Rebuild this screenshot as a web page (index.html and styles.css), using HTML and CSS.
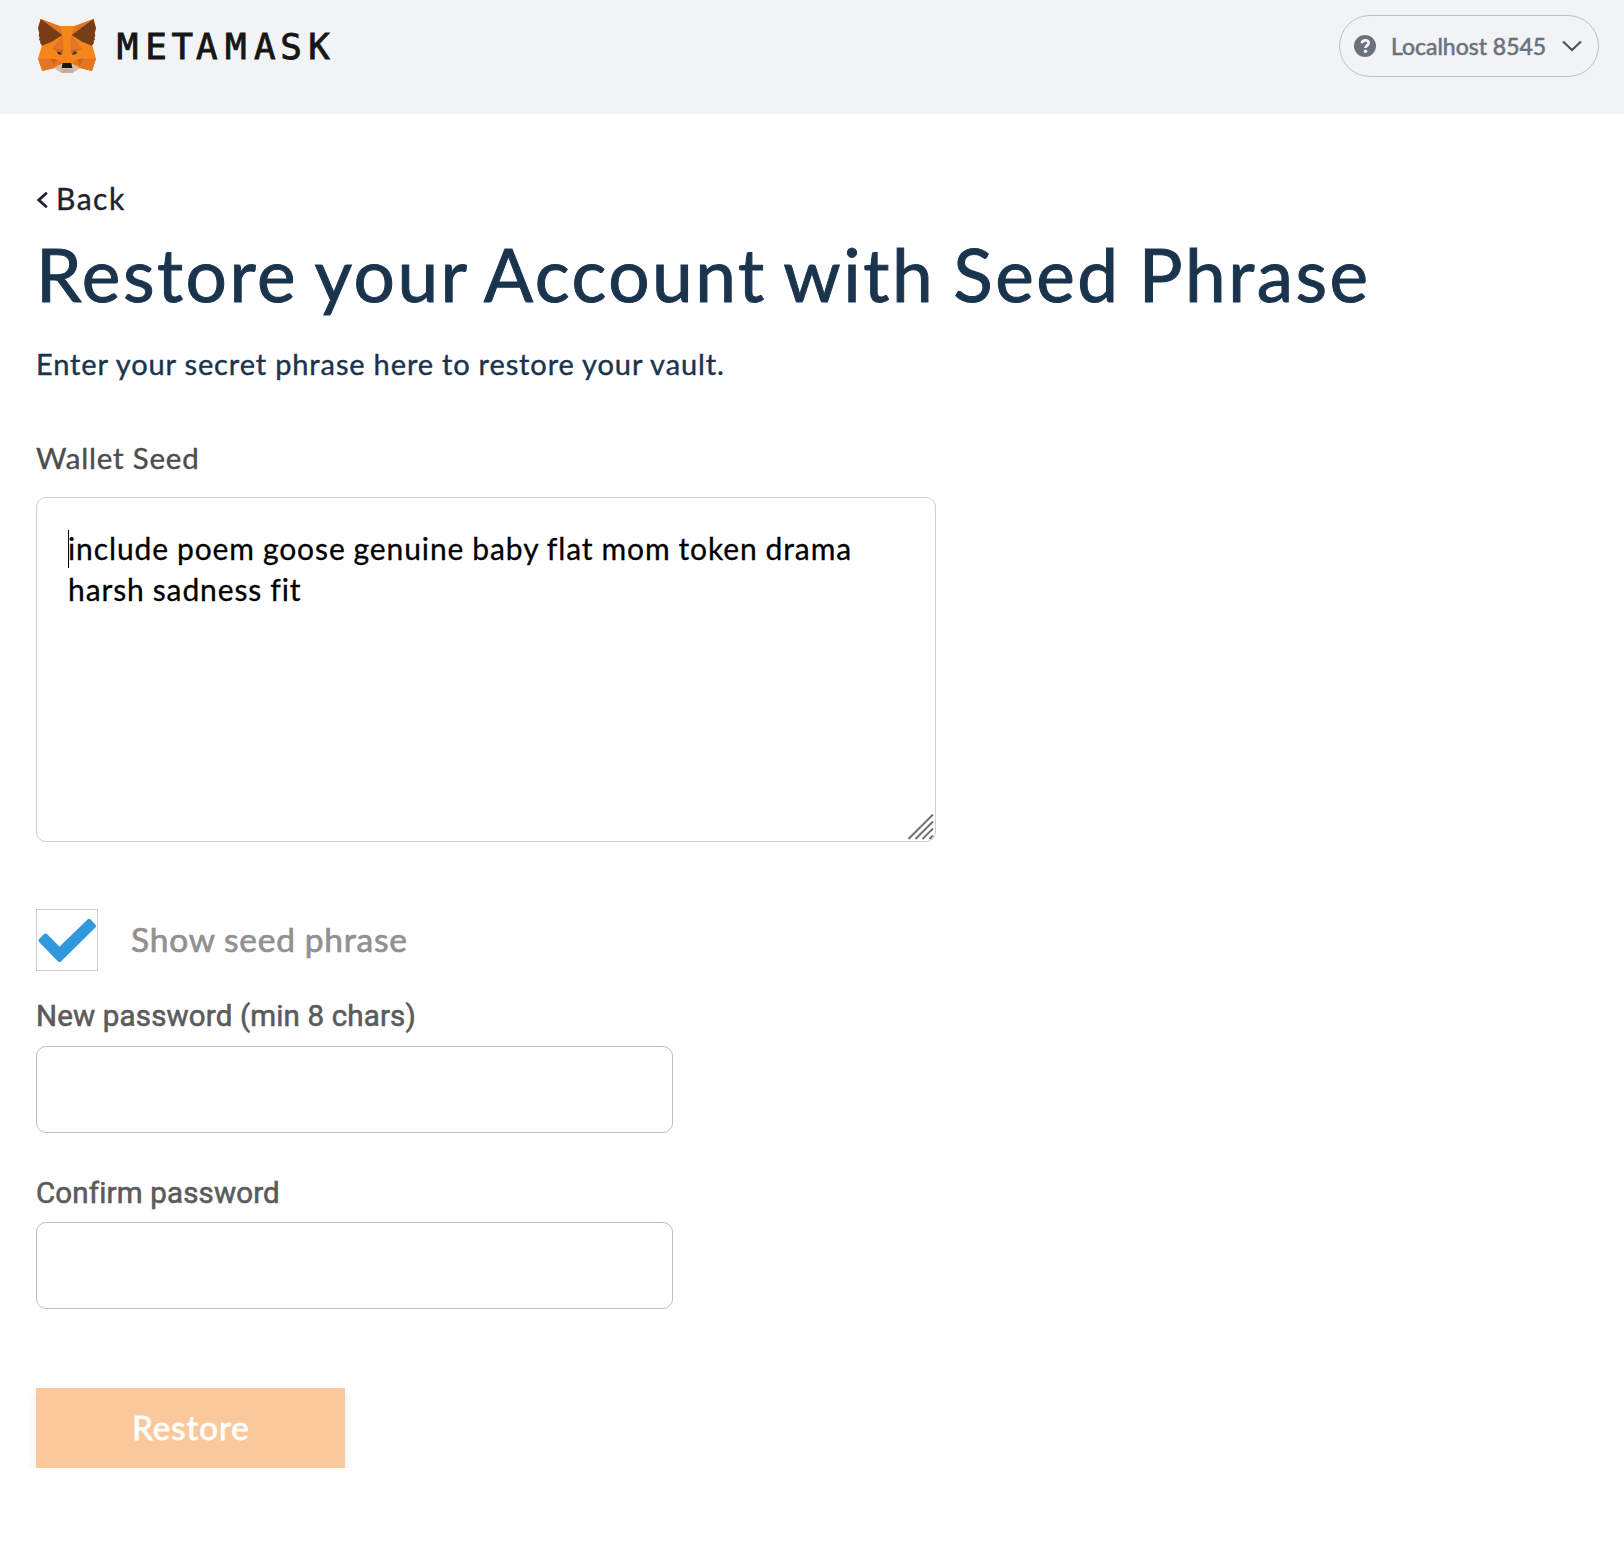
FILE: index.html
```html
<!DOCTYPE html>
<html lang="en">
<head>
<meta charset="utf-8">
<title>MetaMask</title>
<link rel="stylesheet" href="styles.css">
</head>
<body>
<header class="header">
  <div class="brand">
    <svg class="fox" width="60" height="56" viewBox="51 54 180 168">
      <path fill="#f6851b" d="M62 57L119 78H164L221 57L228 85L217 136L228 176L216 213L180 204L158 218H125L103 204L67 213L54 176L66 136L54 85Z"/>
      <path fill="#e27625" d="M62 57L119 78L127 105ZM220 57L164 78L155 105Z"/>
      <path fill="#763d16" d="M62 57L127 105L96 125L66 137L60 128L61 122L57 120L59 111L56 109L58 98L54 85ZM220 57L155 105L186 125L216 137L222 128L221 122L225 120L223 111L226 109L224 98L228 85Z"/>
      <path fill="#e27625" d="M127 106L96 146L130 149L130 130ZM155 106L186 146L152 149L152 130Z"/>
      <path fill="#e27625" d="M54 176H91L106 203L67 213ZM228 176H191L176 203L216 213Z"/>
      <path fill="#cd6116" d="M91 176L109 177L104 199ZM191 176L173 177L178 199ZM96 146L130 149L125 166L116 154ZM186 146L152 149L157 166L166 154Z"/>
      <path fill="#e4751f" d="M109 177L127 190L104 199ZM173 177L155 190L178 199Z"/>
      <path fill="#233447" d="M110 155L121 156L125 164L115 163ZM172 155L161 156L157 164L167 163Z"/>
      <path fill="#d5bfb2" d="M103 203L126 191H156L179 203L158 218H125Z"/>
      <path fill="#c0ad9e" d="M122 206H160L158 218H125Z"/>
      <path fill="#161616" d="M128 189H154L157 204H125Z"/>
    </svg>
    <svg class="wordmark" width="240" height="50" viewBox="0 0 240 50">
      <text x="17.5 46 72.3 96.8 125.7 154.8 181 209" y="38.4">METAMASK</text>
    </svg>
  </div>
  <div class="network">
    <svg width="22" height="22" viewBox="0 0 22 22"><circle cx="11" cy="11" r="11" fill="#6a737d"/><path d="M7.8 8.2C8.2 5.9 9.5 5.4 11.2 5.4C13.2 5.4 14.6 6.5 14.6 8.2C14.6 10.4 11.6 10.4 11.6 13" fill="none" stroke="#f2f3f4" stroke-width="2.7"/><circle cx="11.5" cy="16.2" r="1.8" fill="#f2f3f4"/></svg>
    <span class="network-name">Localhost 8545</span>
    <svg width="22" height="14" viewBox="0 0 22 14"><path d="M2 2.5L11 11L20 2.5" fill="none" stroke="#4d4d4d" stroke-width="2"/></svg>
  </div>
</header>
<main class="content">
  <a class="back"><svg class="back-arrow" width="13" height="18" viewBox="0 0 13 18"><path d="M10.8 1.8L2.8 9L10.8 16.2" fill="none" stroke="#24212e" stroke-width="2.8"/></svg><span>Back</span></a>
  <h1 class="title">Restore your Account with Seed Phrase</h1>
  <p class="hint">Enter your secret phrase here to restore your vault.</p>
  <label class="label" for="seed">Wallet Seed</label>
  <div class="seed-box">
    <textarea class="seed" id="seed" spellcheck="false">include poem goose genuine baby flat mom token drama
harsh sadness fit</textarea>
    <i class="caret"></i>
    <svg class="grip" width="26" height="26" viewBox="0 0 26 26"><path d="M.5 25L25 .5M7.5 25L25 7.5M14.5 25L25 14.5M21.5 25L25 21.5" stroke="#737373" stroke-width="2"/></svg>
  </div>
  <div class="show-row">
    <span class="checkbox"><svg width="60" height="60" viewBox="0 0 60 60"><path fill="#3098dc" stroke="#3098dc" stroke-width="4" stroke-linejoin="round" d="M3.5 30.5L8.5 25.5L22.5 39.5L52.2 10.8L57 16L22.5 50Z"/></svg></span>
    <span class="show-text">Show seed phrase</span>
  </div>
  <label class="pw-label new" for="new">New password (min 8 chars)</label>
  <input class="pw" id="new" type="password">
  <label class="pw-label confirm" for="confirm">Confirm password</label>
  <input class="pw" id="confirm" type="password">
  <button class="restore" type="button">Restore</button>
</main>
</body>
</html>
```
FILE: styles.css
```css
* { box-sizing: border-box; }
body { margin: 0; background: #fff; font-family: Lato, "Liberation Sans", sans-serif; }
svg { display: block; flex: none; }
.header { display: flex; justify-content: space-between; align-items: flex-start; height: 114px; padding: 15px 25px 0 37px; background: #f2f3f4; }
.brand { display: flex; align-items: flex-start; gap: 13px; }
.fox { margin-top: 3px; }
.wordmark { margin-top: 6px; }
.wordmark text { font-family: "DejaVu Sans Mono", monospace; font-size: 35.8px; text-anchor: middle; fill: #161616; stroke: #161616; stroke-width: .9px; }
.network { display: flex; align-items: center; width: 260px; height: 62px; padding: 0 15px 0 14px; border: 1px solid #bbc0c5; border-radius: 31px; }
.network-name { width: 156px; margin: 0 14px 0 15px; font-size: 23px; line-height: 30px; white-space: nowrap; color: #6a737d; -webkit-text-stroke: .6px; }
.content { display: flex; flex-direction: column; align-items: flex-start; padding: 66px 36px 0; }
.back { display: flex; align-items: center; gap: 7px; height: 36px; font-size: 30px; line-height: 36px; letter-spacing: 1.5px; color: #24212e; -webkit-text-stroke: .4px; }
.back-arrow { margin-top: 4px; }
.title { margin: 13px 0 0; height: 90px; font-size: 73px; line-height: 90px; font-weight: 400; letter-spacing: 2.5px; word-spacing: -3px; white-space: nowrap; color: #1b344d; -webkit-text-stroke: 1px; }
.hint { margin: 27px 0 0; height: 36px; font-size: 29px; line-height: 36px; letter-spacing: .9px; word-spacing: -.3px; white-space: nowrap; color: #1b344d; -webkit-text-stroke: .4px; }
.label { margin-top: 58px; height: 36px; font-size: 29.5px; line-height: 36px; letter-spacing: .8px; color: #4d4d4d; -webkit-text-stroke: .4px; }
.seed-box { position: relative; width: 900px; height: 345px; margin-top: 21px; }
.seed { display: block; width: 100%; height: 100%; margin: 0; padding: 30px 31px; border: 1px solid #cdcdcd; border-radius: 10px; outline: 0; resize: none; overflow: hidden; font: 30px/41px Lato, "Liberation Sans", sans-serif; letter-spacing: .9px; word-spacing: -.6px; color: #000; white-space: pre; -webkit-text-stroke: .3px; }
.caret { position: absolute; left: 32px; top: 33px; width: 1px; height: 38px; background: #000; }
.grip { position: absolute; right: 2px; bottom: 2px; }
.show-row { display: flex; align-items: center; gap: 33px; margin-top: 67px; height: 62px; }
.checkbox { width: 62px; height: 62px; border: 1px solid #cdcdcd; }
.show-text { padding-bottom: 2px; font-size: 33.5px; line-height: 40px; letter-spacing: .8px; word-spacing: -.5px; color: #939090; -webkit-text-stroke: .7px; }
.pw-label { height: 36px; font-family: Roboto, sans-serif; font-size: 29.5px; line-height: 36px; letter-spacing: .16px; color: #5b5b5b; -webkit-text-stroke: .6px; }
.new { margin-top: 27px; }
.confirm { margin-top: 42px; }
.pw { width: 637px; height: 87px; margin: 12px 0 0; border: 1px solid #bbc0c5; border-radius: 10px; outline: 0; background: #fff; }
.confirm + .pw { margin-top: 11px; }
.restore { width: 309px; height: 80px; margin-top: 79px; padding: 0 0 2px 1px; border: 0; background: #fbc89b; color: #fff; font: 33px/40px Lato, "Liberation Sans", sans-serif; letter-spacing: 1px; box-shadow: 0 4px 10px rgba(0,0,0,.1); -webkit-text-stroke: .8px; }
```
